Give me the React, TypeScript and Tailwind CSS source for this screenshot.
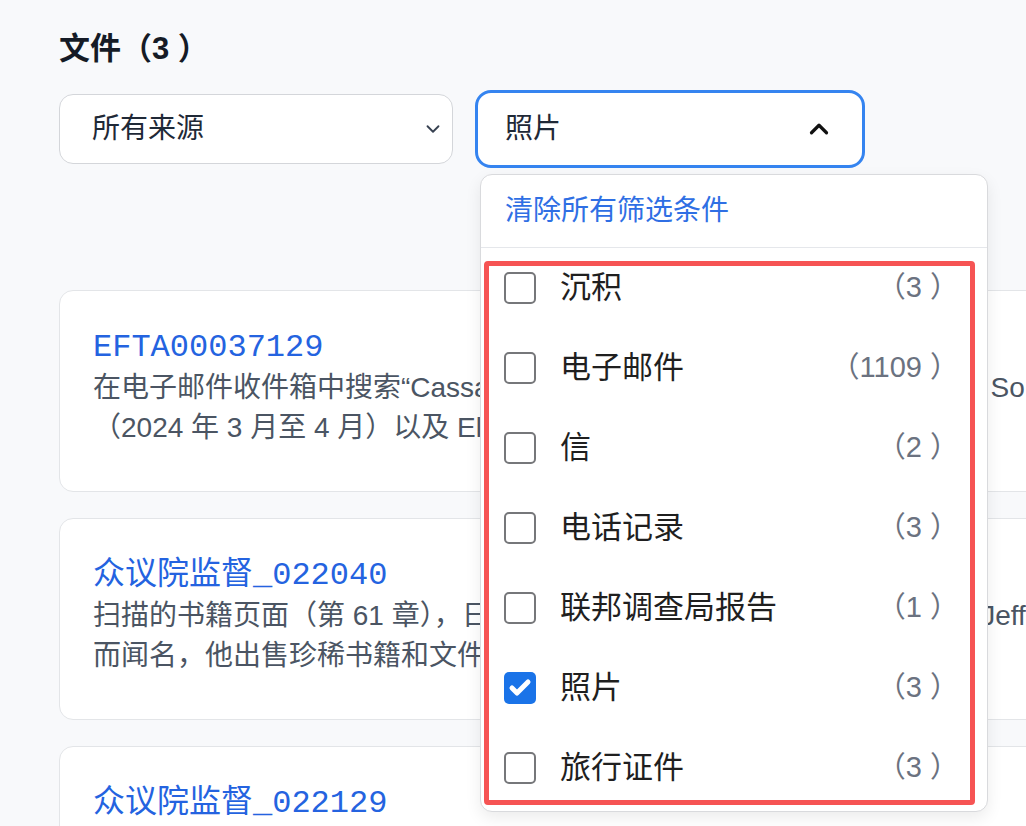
import { Check, ChevronDown, ChevronUp } from "lucide-react";

const sans = "font-['Liberation_Sans','Noto_Sans_CJK_SC',sans-serif]";
const mono = "font-['Liberation_Mono','Noto_Sans_CJK_SC',monospace]";

const options = [
  { label: "沉积", count: "（3 ）", checked: false },
  { label: "电子邮件", count: "（1109 ）", checked: false },
  { label: "信", count: "（2 ）", checked: false },
  { label: "电话记录", count: "（3 ）", checked: false },
  { label: "联邦调查局报告", count: "（1 ）", checked: false },
  { label: "照片", count: "（3 ）", checked: true },
  { label: "旅行证件", count: "（3 ）", checked: false },
];

const docs = [
  {
    title: "EFTA00037129",
    lines: [
      "在电子邮件收件箱中搜索“Cassandra” 的全部邮件，包括收件人和发件人 Sonnenberg 的往来记录",
      "（2024 年 3 月至 4 月）以及 Ellen 的相关邮件。",
    ],
  },
  {
    title: "众议院监督_022040",
    lines: [
      "扫描的书籍页面（第 61 章），日记中详细记载了以收藏古籍著称的书商 \u00a0Jeffrey 的故事",
      "而闻名，他出售珍稀书籍和文件。",
    ],
  },
  {
    title: "众议院监督_022129",
    lines: ["扫描的照片页面，记录了多处房产的外观。", ""],
  },
];

function FilterMenu() {
  return (
    <div className="absolute left-[2px] top-[81px] z-10 w-[508px] rounded-[12px] border border-[#d9dadd] bg-white shadow-[0_6px_16px_rgba(0,0,0,0.08)]">
      <div className="flex h-[72px] items-center pl-[24px] text-[28px] text-[#2f6fe4]">
        清除所有筛选条件
      </div>
      <div className="h-px bg-[#e5e7eb]" />
      <div className="pb-[3px]">
        {options.map((o) => (
          <div key={o.label} className="flex h-[80px] items-center pl-[23px] pr-[28px]">
            {o.checked ? (
              <span className="flex h-[32px] w-[32px] items-center justify-center rounded-[5px] bg-[#1a73e8]">
                <Check className="h-[24px] w-[24px] text-white" strokeWidth={5} />
              </span>
            ) : (
              <span className="h-[32px] w-[32px] rounded-[5px] border-2 border-[#76777a] bg-white" />
            )}
            <span className="ml-[24px] flex-1 text-[31px] text-[#1f1f1f]">{o.label}</span>
            <span className="text-[29px] text-[#6b7280]">{o.count}</span>
          </div>
        ))}
      </div>
      <div className="pointer-events-none absolute left-[3px] top-[86px] h-[544px] w-[491px] rounded-[4px] border-[5px] border-[#f65454]" />
    </div>
  );
}

export default function App() {
  return (
    <div className={`h-screen overflow-hidden bg-[#f8f9fb] ${sans}`}>
      <div className="w-[1160px] pl-[59px] pt-[29px]">
        <h1 className="text-[31px] font-bold leading-[40px] text-[#151b26]">文件（3 ）</h1>

        <div className="mt-[21px] flex items-center gap-[22px]">
          <div className="flex h-[70px] w-[394px] items-center justify-between rounded-[14px] border-[1.5px] border-[#d4d6da] bg-white pl-[32px] pr-[8px]">
            <span className="text-[28px] text-[#1f2937]">所有来源</span>
            <ChevronDown className="h-[22px] w-[22px] text-[#374151]" strokeWidth={2} />
          </div>
          <div className="relative flex h-[78px] w-[390px] items-center justify-between rounded-[16px] border-[3px] border-[#3584f0] bg-white pl-[27px] pr-[28px]">
            <span className="text-[28px] text-[#1f2937]">照片</span>
            <ChevronUp className="h-[30px] w-[30px] text-[#111]" strokeWidth={2.6} />
            <FilterMenu />
          </div>
        </div>

        <div className="mt-[122px] flex flex-col gap-[26px]">
          {docs.map((d) => (
            <div
              key={d.title}
              className="rounded-[14px] border border-[#e3e5e8] bg-white pb-[43px] pl-[33px] pt-[37px]"
            >
              <div className={`text-[32px] leading-[40px] text-[#2463e0] ${mono}`}>{d.title}</div>
              {d.lines.map((l, i) => (
                <div key={i} className="h-[40px] whitespace-nowrap text-[28px] leading-[40px] text-[#4b5563]">
                  {l}
                </div>
              ))}
            </div>
          ))}
        </div>
      </div>
    </div>
  );
}
